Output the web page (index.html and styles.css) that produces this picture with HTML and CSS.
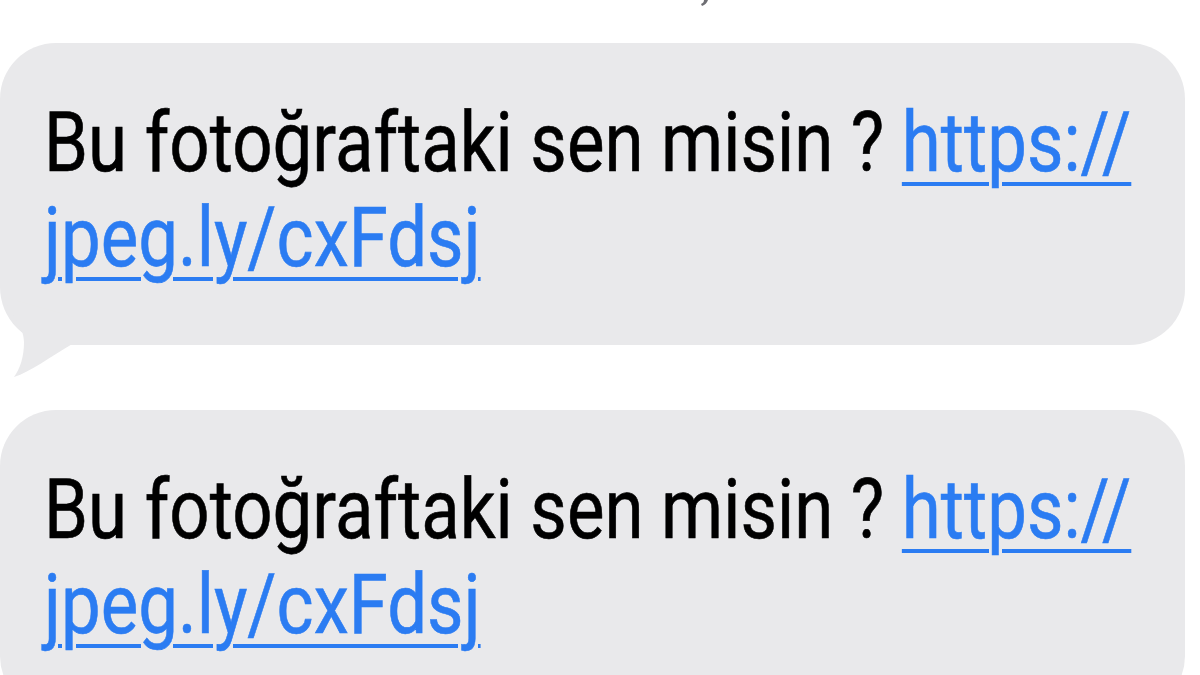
FILE: index.html
```html
<!DOCTYPE html>
<html lang="tr">
<head>
<meta charset="utf-8">
<title>Mesajlar</title>
<link rel="stylesheet" href="styles.css">
</head>
<body>
<main class="thread">
  <div class="meta">
    <svg class="meta-mark" width="10" height="8" viewBox="0 0 10 8" aria-hidden="true">
      <path d="M5 0 L9 0 C8 3 6 5 3 6 L2 4 C4 3 5 2 5 0 Z" fill="#6e6e73"/>
    </svg>
  </div>
  <div class="bubble bubble--tail">
    <p class="msg">Bu fotoğraftaki sen misin ? <a href="#">https://<br>jpeg.ly/cxFdsj</a></p>
    <svg class="tail" width="90" height="130" viewBox="0 0 90 130" aria-hidden="true">
      <path d="M4 40 C10 60 24 68 24 85 C24 100 20 112 14 120 C30 115 50 100 74 86 L74 60 Z" fill="#e9e9eb"/>
    </svg>
  </div>
  <div class="bubble">
    <p class="msg">Bu fotoğraftaki sen misin ? <a href="#">https://<br>jpeg.ly/cxFdsj</a></p>
  </div>
</main>
</body>
</html>
```
FILE: styles.css
```css
html, body {
  margin: 0;
  padding: 0;
  background: #ffffff;
  overflow: hidden;
  width: 1200px;
  height: 675px;
}

.thread {
  display: flex;
  flex-direction: column;
  gap: 65px;
  font-family: Roboto, "Liberation Sans", sans-serif;
}

.meta {
  height: 8px;
  display: flex;
  justify-content: center;
  margin-bottom: -30px;
}

.meta-mark {
  margin-left: 208px;
}

.bubble {
  position: relative;
  width: 1185px;
  box-sizing: border-box;
  padding: 52px 0 60px 44px;
  background: #e9e9eb;
  border-radius: 56px;
}

.bubble--tail {
  border-bottom-left-radius: 58px;
}

.msg {
  margin: 0;
  font-size: 83px;
  line-height: 95px;
  color: #000000;
  white-space: nowrap;
  transform: scaleX(0.853);
  transform-origin: 0 0;
  height: 190px;
  -webkit-text-stroke: 0.6px currentColor;
}

.msg a {
  color: #2b7cf2;
  text-decoration: underline;
  text-decoration-thickness: 4px;
  text-underline-offset: 11px;
}

.tail {
  position: absolute;
  left: 0;
  top: 214px;
}
```
